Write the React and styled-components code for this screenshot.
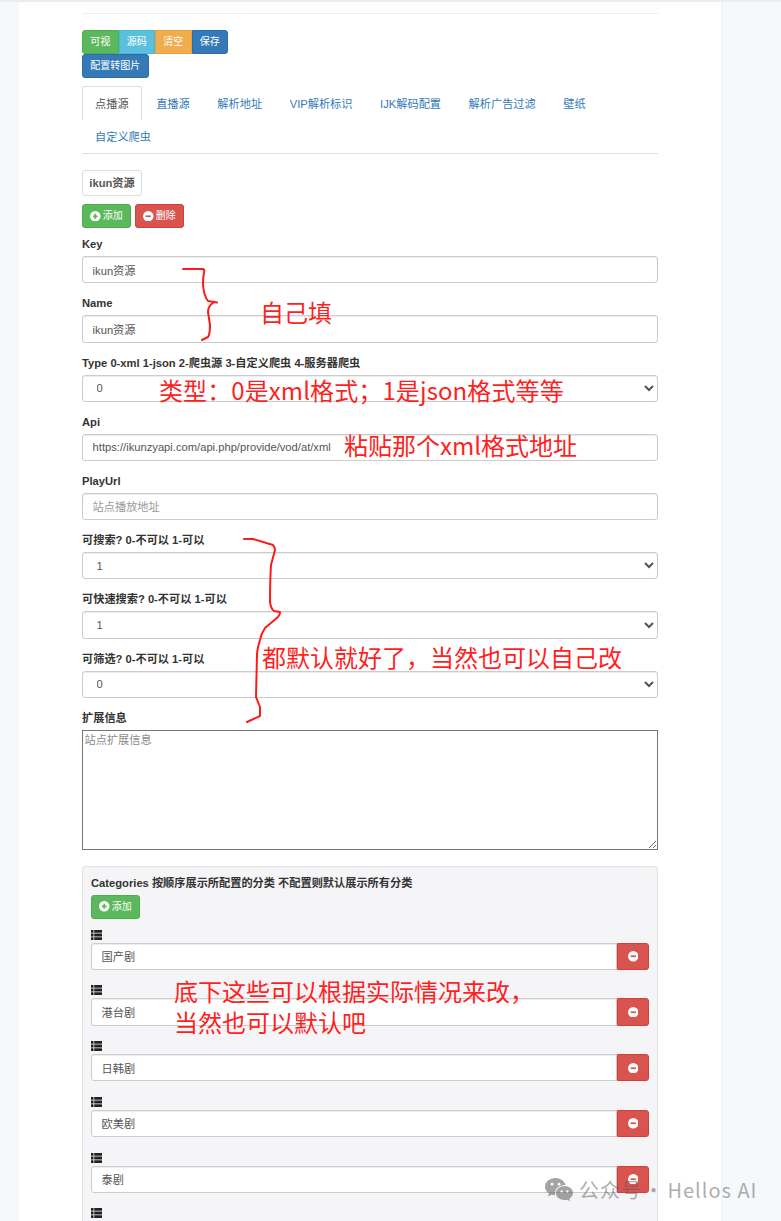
import React from "react";
import styled, { createGlobalStyle } from "styled-components";

const Global = createGlobalStyle`
  html, body { margin: 0; padding: 0; height: 1221px; overflow: hidden; background: #fff; }
  * { box-sizing: border-box; }
  body { font-family: "Liberation Sans", "Noto Sans CJK SC", sans-serif; font-size: 11.2px; color: #333; line-height: 16px; }
`;

const Page = styled.div`
  position: relative;
  width: 781px;
  height: 1221px;
  overflow: hidden;
  display: flex;
  border-top: 2px solid #ececee;
`;
const Gutter = styled.div`
  width: 19px;
  flex: none;
  background: #f7f8fa;
`;
const Main = styled.main`
  width: 702px;
  padding: 0 63px 0 63px;
  background: #fff;
  flex: none;
`;
const Aside = styled.div`
  flex: 1;
  background: #f7f8fa;
  border-left: 1px solid #f1f2f4;
`;
const Rule = styled.hr`
  border: 0;
  border-top: 1px solid #eee;
  margin: 11px 0 16px;
`;
const ButtonRow = styled.div`
  display: flex;
  flex-wrap: wrap;
  width: 100%;
`;
const GroupButton = styled.button`
  height: 24px;
  padding: 0 7.25px;
  font-family: inherit;
  font-size: 10px;
  line-height: 16px;
  color: #fff;
  border: 1px solid ${p => p.$border};
  background: ${p => p.$bg};
  border-radius: ${p => p.$radius};
  display: inline-flex;
  align-items: center;
  gap: 2px;
  flex: none;
`;
const Break = styled.div`
  flex-basis: 100%;
  height: 0;
`;
const Tabs = styled.ul`
  list-style: none;
  margin: 8px 0 16px;
  padding: 0;
  display: flex;
  flex-wrap: wrap;
  border-bottom: 1px solid #ddd;
`;
const Tab = styled.li`
  height: 33.6px;
  padding: 8.6px 12px 7.4px;
  margin-right: 1.6px;
  border: 1px solid ${p => (p.$active ? "#ddd" : "transparent")};
  border-bottom: 0;
  border-radius: 3px 3px 0 0;
  color: ${p => (p.$active ? "#555" : "#337ab7")};
  background: #fff;
  white-space: nowrap;
`;
const Pill = styled.div`
  width: 60px;
  height: 26px;
  display: flex;
  align-items: center;
  justify-content: center;
  border: 1px solid #ddd;
  border-radius: 3px;
  font-weight: 700;
  color: #555;
  margin-bottom: 8px;
`;
const Actions = styled.div`
  display: flex;
  gap: 4px;
  margin-bottom: 8px;
`;
const Group = styled.div`
  margin-bottom: 12px;
`;
const Label = styled.label`
  display: block;
  font-weight: 700;
  margin-bottom: 4px;
  height: 16px;
  color: #333;
  white-space: nowrap;
`;
const Input = styled.input`
  display: block;
  width: 100%;
  height: 27.2px;
  padding: 4.8px 9.6px;
  font: inherit;
  color: #555;
  background: #fff;
  border: 1px solid #ccc;
  border-radius: 3px;
  box-shadow: inset 0 1px 1px rgba(0,0,0,.075);
  outline: 0;
  &::placeholder { color: #999; opacity: 1; }
`;
const Select = styled.select`
  display: block;
  width: 100%;
  height: 27.2px;
  padding: 4.8px 9.6px;
  font: inherit;
  color: #555;
  background: #fff;
  border: 1px solid #ccc;
  border-radius: 3px;
  box-shadow: inset 0 1px 1px rgba(0,0,0,.075);
`;
const TextArea = styled.textarea`
  display: block;
  width: 100%;
  height: 120px;
  padding: 1px 1.5px;
  font: inherit;
  color: #555;
  background: #fff;
  border: 1px solid #767676;
  &::placeholder { color: #8a8a8a; opacity: 1; }
`;
const Panel = styled.section`
  margin-top: 16px;
  height: 420px;
  padding: 8px 8px 0;
  background: #f5f5f7;
  border: 1px solid #e3e3e3;
  border-radius: 3px;
`;
const PanelTitle = styled.div`
  font-weight: 700;
  height: 16px;
  margin-bottom: 4px;
  display: flex;
  align-items: center;
`;
const PanelAdd = styled.div`
  margin-bottom: 8px;
`;
const CatRow = styled.div`
  margin-bottom: 12.55px;
`;
const CatHandle = styled.div`
  height: 16px;
  display: flex;
  align-items: center;
`;
const CatLine = styled.div`
  display: flex;
`;
const CatInput = styled(Input)`
  flex: 1;
  border-radius: 3px 0 0 3px;
`;
const DelBtn = styled.button`
  width: 32px;
  height: 27.2px;
  padding: 0;
  flex: none;
  display: flex;
  align-items: center;
  justify-content: center;
  background: #d9534f;
  border: 1px solid #d43f3a;
  border-radius: 0 3px 3px 0;
`;
const Note = styled.div`
  position: absolute;
  left: ${p => p.$x}px;
  top: ${p => p.$y}px;
  color: #ff1f1f;
  font-family: "Noto Sans CJK SC", sans-serif;
  font-size: 24px;
  line-height: 31px;
  letter-spacing: ${p => p.$ls || 0};
  white-space: nowrap;
`;
const Strokes = styled.svg`
  position: absolute;
  left: 0;
  top: -2px;
  pointer-events: none;
`;
const Watermark = styled.div`
  position: absolute;
  left: 545px;
  top: 1174px;
  display: flex;
  align-items: center;
  gap: 6px;
  color: rgba(90,90,90,.5);
  font-family: "Noto Sans CJK SC", "Noto Sans", sans-serif;
  font-size: 20px;
  line-height: 28px;
  letter-spacing: 1px;
  white-space: nowrap;
`;
const WatermarkSource = styled.span`
  word-spacing: -4px;
`;
const WatermarkName = styled.span`
  margin-left: -3px;
`;

const Plus = () => (
  <svg width="10.500" height="10.500" viewBox="0 0 12 12">
    <circle cx="6" cy="6" r="6" fill="#fff" />
    <path d="M3.2 6h5.600M6 3.2v5.600" stroke="#5cb85c" strokeWidth="2" />
  </svg>
);
const Minus = () => (
  <svg width="10.500" height="10.500" viewBox="0 0 12 12">
    <circle cx="6" cy="6" r="6" fill="#fff" />
    <path d="M3 6h6" stroke="#d9534f" strokeWidth="2" />
  </svg>
);
const ListIcon = () => (
  <svg width="11" height="10" viewBox="0 0 11 10">
    <path d="M0 0h2.500v2.800H0zM3.200 0H11v2.800H3.200zM0 3.600h2.500v2.800H0zM3.200 3.600H11v2.800H3.200zM0 7.200h2.500V10H0zM3.200 7.200H11V10H3.200z" fill="#222" />
  </svg>
);
const WeChat = () => (
  <svg width="28" height="24" viewBox="0 0 28 24">
    <path d="M10.500 0C4.700 0 0 3.900 0 8.700c0 2.700 1.500 5.100 3.900 6.700L3 18.600l3.600-1.900c1.100.3 2.400.5 3.700.5-.2-.7-.3-1.400-.3-2.100 0-4.500 4.400-8.100 9.900-8.100h.7C19.600 3 15.500 0 10.500 0z" fill="rgba(90,90,90,.55)" />
    <path d="M28 15.100c0-3.900-3.800-7-8.500-7s-8.500 3.100-8.500 7 3.800 7 8.500 7c1 0 2-.1 2.900-.4l2.900 1.600-.8-2.600C26.600 19.400 28 17.400 28 15.100z" fill="rgba(90,90,90,.55)" />
    <circle cx="7" cy="6.200" r="1.400" fill="#fff" /><circle cx="14" cy="6.200" r="1.400" fill="#fff" />
    <circle cx="16.600" cy="13.400" r="1.100" fill="#fff" /><circle cx="22.400" cy="13.400" r="1.100" fill="#fff" />
  </svg>
);

const tabs = ["点播源", "直播源", "解析地址", "VIP解析标识", "IJK解码配置", "解析广告过滤", "壁纸", "自定义爬虫"];
const cats = ["国产剧", "港台剧", "日韩剧", "欧美剧", "泰剧", ""];

const Field = ({ label, value, placeholder }) => (
  <Group>
    <Label>{label}</Label>
    <Input defaultValue={value} placeholder={placeholder} />
  </Group>
);
const Choice = ({ label, value, options }) => (
  <Group>
    <Label>{label}</Label>
    <Select defaultValue={value}>
      {options.map(o => <option key={o} value={o}>{o}</option>)}
    </Select>
  </Group>
);

export default function App() {
  return (
    <Page>
      <Global />
      <Gutter />
      <Main>
        <Rule />
        <ButtonRow>
          <GroupButton $bg="#5cb85c" $border="#4cae4c" $radius="3px 0 0 3px">可视</GroupButton>
          <GroupButton $bg="#5bc0de" $border="#46b8da" $radius="0">源码</GroupButton>
          <GroupButton $bg="#f0ad4e" $border="#eea236" $radius="0">清空</GroupButton>
          <GroupButton $bg="#337ab7" $border="#2e6da4" $radius="0 3px 3px 0">保存</GroupButton>
          <Break />
          <GroupButton $bg="#337ab7" $border="#2e6da4" $radius="3px">配置转图片</GroupButton>
        </ButtonRow>
        <Tabs>
          {tabs.map((t, i) => <Tab key={t} $active={i === 0}>{t}</Tab>)}
        </Tabs>
        <Pill>ikun资源</Pill>
        <Actions>
          <GroupButton $bg="#5cb85c" $border="#4cae4c" $radius="3px"><Plus />添加</GroupButton>
          <GroupButton $bg="#d9534f" $border="#d43f3a" $radius="3px"><Minus />删除</GroupButton>
        </Actions>
        <Field label="Key" value="ikun资源" />
        <Field label="Name" value="ikun资源" />
        <Choice label="Type 0-xml 1-json 2-爬虫源 3-自定义爬虫 4-服务器爬虫" value="0" options={["0", "1", "2", "3", "4"]} />
        <Field label="Api" value="https://ikunzyapi.com/api.php/provide/vod/at/xml" />
        <Field label="PlayUrl" placeholder="站点播放地址" />
        <Choice label="可搜索? 0-不可以 1-可以" value="1" options={["0", "1"]} />
        <Choice label="可快速搜索? 0-不可以 1-可以" value="1" options={["0", "1"]} />
        <Choice label="可筛选? 0-不可以 1-可以" value="0" options={["0", "1"]} />
        <Group>
          <Label>扩展信息</Label>
          <TextArea placeholder="站点扩展信息" />
        </Group>
        <Panel>
          <PanelTitle>Categories 按顺序展示所配置的分类 不配置则默认展示所有分类</PanelTitle>
          <PanelAdd>
            <GroupButton $bg="#5cb85c" $border="#4cae4c" $radius="3px"><Plus />添加</GroupButton>
          </PanelAdd>
          {cats.map((c, i) => (
            <CatRow key={i}>
              <CatHandle><ListIcon /></CatHandle>
              <CatLine>
                <CatInput defaultValue={c} />
                <DelBtn><Minus /></DelBtn>
              </CatLine>
            </CatRow>
          ))}
        </Panel>
      </Main>
      <Aside />
      <Strokes width="781" height="1221" fill="none" stroke="#ff1a1a" strokeWidth="2" strokeLinecap="round" strokeLinejoin="round">
        <path d="M183 269L203 269Q205 270 204 273Q203 277 203 285Q204 296 208 301L217 302.500M213 303Q208 306 208 312L210 325Q210 334 208 337L202 340" />
        <path d="M244 539L253 539L273 545Q275 547 275 550L271 565Q270 580 270 602Q271 609 274 611L280 612Q280 615 278 617L265 628Q261 634 260 640Q257 650 257 655L256 697L260 707L260 716L247 722" />
      </Strokes>
      <Note $x={260} $y={294}>自己填</Note>
      <Note $x={159} $y={372} $ls=".1px">类型：0是xml格式；1是json格式等等</Note>
      <Note $x={344} $y={427}>粘贴那个xml格式地址</Note>
      <Note $x={262} $y={639}>都默认就好了，当然也可以自己改</Note>
      <Note $x={174} $y={973}>底下这些可以根据实际情况来改，<br />当然也可以默认吧</Note>
      <Watermark>
        <WeChat />
        <WatermarkSource>公众号 · </WatermarkSource>
        <WatermarkName>Hellos AI</WatermarkName>
      </Watermark>
    </Page>
  );
}
